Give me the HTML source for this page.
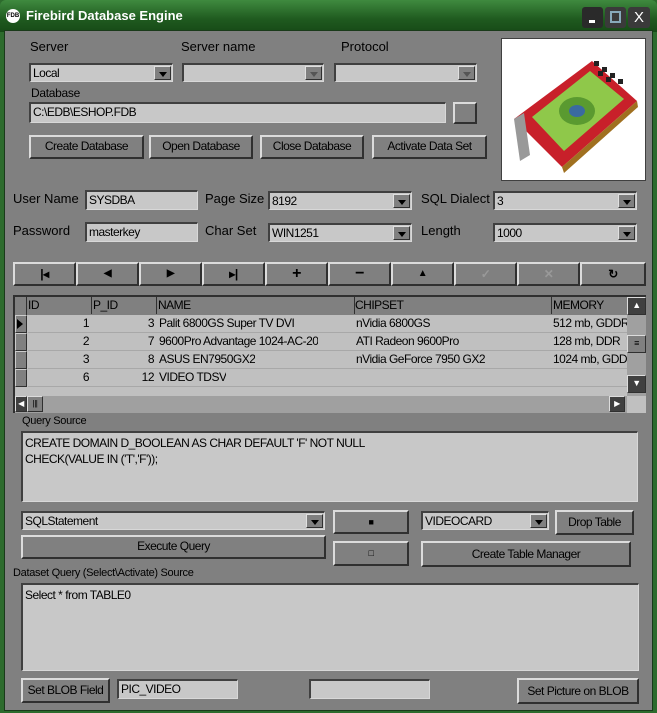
<!DOCTYPE html>
<html><head><meta charset="utf-8"><style>
*{box-sizing:border-box;margin:0;padding:0}
body{width:657px;height:713px;background:#2d6b2d;position:relative;overflow:hidden;font-family:"Liberation Sans",sans-serif;font-size:12px;color:#000}
.a{position:absolute}
#win{left:4px;top:30px;width:649px;height:681px;background:#808080;border:1px solid #1a3a1a}
#title{left:0;top:0;width:657px;height:32px;background:linear-gradient(#3f8a3f,#1f5a1f 60%,#174a17);border-radius:6px 6px 0 0}
.lbl{position:absolute;white-space:nowrap;color:#000;letter-spacing:-0.3px}
.big{font-size:13px;letter-spacing:0}
.inp{position:absolute;background:#c8c8c8;border-top:2px solid #404040;border-left:2px solid #404040;border-bottom:1px solid #d8d8d8;border-right:1px solid #d8d8d8;padding-left:2px;white-space:nowrap;overflow:hidden;line-height:16px;font-size:12px;letter-spacing:-0.5px}
.btn{position:absolute;background:#808080;border-top:2px solid #dcdcdc;border-left:2px solid #dcdcdc;border-bottom:2px solid #303030;border-right:2px solid #303030;text-align:center;white-space:nowrap;font-size:12px;letter-spacing:-0.5px}
.dd{position:absolute;right:1px;top:1px;width:17px;bottom:1px;background:#808080;border-top:1px solid #e0e0e0;border-left:1px solid #e0e0e0;border-bottom:1px solid #303030;border-right:1px solid #303030}
.dd:after{content:"";position:absolute;left:4px;top:5px;border-left:4px solid transparent;border-right:4px solid transparent;border-top:5px solid #000}
.dis:after{border-top-color:#555}
.cell{position:absolute;white-space:nowrap;overflow:hidden;font-size:12px;line-height:17px;letter-spacing:-0.5px}
.row{position:absolute;left:13px;width:599px;height:18px;border-bottom:1px solid #a8a8a8}
</style></head><body>
<div id="title" class="a">
 <div class="a" style="left:6px;top:9px;width:14px;height:14px;border-radius:7px;background:#fff;font-size:6px;line-height:14px;text-align:center;font-weight:bold">FDB</div>
 <div class="a" style="left:26px;top:8px;color:#fff;font-weight:bold;font-size:13px">Firebird Database Engine</div>
 <div class="a" style="left:582px;top:7px;width:21px;height:21px;background:#2a2a2a;border-radius:3px"><div class="a" style="left:7px;top:13px;width:6px;height:3px;background:#fff"></div></div>
 <div class="a" style="left:605px;top:7px;width:21px;height:21px;background:#3a3a3a;border-radius:3px"><div class="a" style="left:5px;top:4px;width:11px;height:12px;border:2px solid #8ab"></div></div>
 <div class="a" style="left:628px;top:7px;width:22px;height:21px;background:#3a3a3a;border-radius:3px;color:#fff;font-size:15px;text-align:center;line-height:21px">X</div>
</div>
<div id="win" class="a"></div>

<div class="lbl big" style="left:30px;top:39px">Server</div>
<div class="lbl big" style="left:181px;top:39px">Server name</div>
<div class="lbl big" style="left:341px;top:39px">Protocol</div>
<div class="inp" style="left:29px;top:63px;width:144px;height:19px">Local<div class="dd"></div></div>
<div class="inp" style="left:182px;top:63px;width:142px;height:19px"><div class="dd dis"></div></div>
<div class="inp" style="left:334px;top:63px;width:143px;height:19px"><div class="dd dis"></div></div>
<div class="lbl" style="left:31px;top:86px">Database</div>
<div class="inp" style="left:29px;top:102px;width:417px;height:21px;line-height:17px">C:\EDB\ESHOP.FDB</div>
<div class="btn" style="left:453px;top:102px;width:24px;height:22px;border-color:#dcdcdc #303030 #303030 #dcdcdc"></div>
<div class="btn" style="left:29px;top:135px;width:115px;height:24px;line-height:19px">Create Database</div>
<div class="btn" style="left:149px;top:135px;width:104px;height:24px;line-height:19px">Open Database</div>
<div class="btn" style="left:260px;top:135px;width:104px;height:24px;line-height:19px">Close Database</div>
<div class="btn" style="left:372px;top:135px;width:115px;height:24px;line-height:19px">Activate Data Set</div>

<div class="a" style="left:501px;top:38px;width:145px;height:143px;background:#fff;border:1px solid #404040">
<svg width="143" height="141" viewBox="0 0 143 141">
<polygon points="12,80 90,22 135,62 60,128" fill="#c8202a"/>
<polygon points="30,78 88,32 122,60 62,112" fill="#8fc84a"/>
<ellipse cx="75" cy="72" rx="18" ry="14" fill="#5a9a30"/>
<ellipse cx="75" cy="72" rx="8" ry="6" fill="#3a6aa0"/>
<polygon points="12,80 22,74 28,116 18,122" fill="#999"/>
<polygon points="60,128 135,62 136,68 62,134" fill="#a07020"/>
<g fill="#222"><rect x="92" y="22" width="5" height="5"/><rect x="100" y="28" width="5" height="5"/><rect x="108" y="34" width="5" height="5"/><rect x="116" y="40" width="5" height="5"/><rect x="96" y="32" width="5" height="5"/><rect x="104" y="38" width="5" height="5"/></g>
</svg></div>

<div class="lbl big" style="left:13px;top:191px">User Name</div>
<div class="inp" style="left:85px;top:190px;width:113px;height:20px">SYSDBA</div>
<div class="lbl big" style="left:205px;top:191px">Page Size</div>
<div class="inp" style="left:268px;top:191px;width:144px;height:19px">8192<div class="dd"></div></div>
<div class="lbl big" style="left:421px;top:191px">SQL Dialect</div>
<div class="inp" style="left:493px;top:191px;width:144px;height:19px">3<div class="dd"></div></div>
<div class="lbl big" style="left:13px;top:223px">Password</div>
<div class="inp" style="left:85px;top:222px;width:113px;height:20px">masterkey</div>
<div class="lbl big" style="left:205px;top:223px">Char Set</div>
<div class="inp" style="left:268px;top:223px;width:144px;height:19px">WIN1251<div class="dd"></div></div>
<div class="lbl big" style="left:421px;top:223px">Length</div>
<div class="inp" style="left:493px;top:223px;width:144px;height:19px">1000<div class="dd" style="background:#808080"></div></div>

<div class="a" style="left:13px;top:262px;width:633px;height:24px;font-size:13px;font-weight:bold">
 <div class="btn" style="left:0;top:0;width:63px;height:24px;line-height:20px">|◂</div>
 <div class="btn" style="left:63px;top:0;width:63px;height:24px;line-height:20px;font-size:10px">◀</div>
 <div class="btn" style="left:126px;top:0;width:63px;height:24px;line-height:20px;font-size:10px">▶</div>
 <div class="btn" style="left:189px;top:0;width:63px;height:24px;line-height:20px">▸|</div>
 <div class="btn" style="left:252px;top:0;width:63px;height:24px;line-height:20px;font-size:16px">+</div>
 <div class="btn" style="left:315px;top:0;width:63px;height:24px;line-height:20px;font-size:16px">−</div>
 <div class="btn" style="left:378px;top:0;width:63px;height:24px;line-height:20px;font-size:10px">▲</div>
 <div class="btn" style="left:441px;top:0;width:63px;height:24px;line-height:20px;color:#999">✓</div>
 <div class="btn" style="left:504px;top:0;width:63px;height:24px;line-height:20px;color:#999">✕</div>
 <div class="btn" style="left:567px;top:0;width:66px;height:24px;line-height:20px">↻</div>
</div>

<div class="a" style="left:13px;top:295px;width:633px;height:118px;background:#c0c0c0;border-top:2px solid #303030;border-left:2px solid #303030">
 <div class="a" style="left:0;top:0;width:612px;height:18px;background:#808080"></div>
 <div class="cell" style="left:0;top:0;width:12px;height:18px;border-right:1px solid #303030"></div>
 <div class="cell" style="left:13px;top:0;width:64px;border-right:1px solid #303030">ID</div>
 <div class="cell" style="left:78px;top:0;width:64px;border-right:1px solid #303030">P_ID</div>
 <div class="cell" style="left:143px;top:0;width:197px;border-right:1px solid #303030">NAME</div>
 <div class="cell" style="left:340px;top:0;width:197px;border-right:1px solid #303030">CHIPSET</div>
 <div class="cell" style="left:538px;top:0;width:74px">MEMORY</div>
 <div class="row" style="top:18px"></div><div class="row" style="top:36px"></div><div class="row" style="top:54px"></div><div class="row" style="top:72px"></div>
 <div class="a" style="left:0;top:18px;width:12px;height:18px;background:#808080;border:1px solid #303030;border-top-color:#ccc;border-left-color:#ccc"></div>
 <div class="a" style="left:0;top:36px;width:12px;height:18px;background:#808080;border:1px solid #303030;border-top-color:#ccc;border-left-color:#ccc"></div>
 <div class="a" style="left:0;top:54px;width:12px;height:18px;background:#808080;border:1px solid #303030;border-top-color:#ccc;border-left-color:#ccc"></div>
 <div class="a" style="left:0;top:72px;width:12px;height:18px;background:#808080;border:1px solid #303030;border-top-color:#ccc;border-left-color:#ccc"></div>
 <div class="a" style="left:2px;top:22px;border-top:5px solid transparent;border-bottom:5px solid transparent;border-left:6px solid #000"></div>
 <div class="cell" style="left:13px;top:18px;width:64px;text-align:right;padding-right:3px">1</div>
 <div class="cell" style="left:78px;top:18px;width:64px;text-align:right;padding-right:3px">3</div>
 <div class="cell" style="left:144px;top:18px">Palit 6800GS Super TV DVI</div>
 <div class="cell" style="left:341px;top:18px">nVidia 6800GS</div>
 <div class="cell" style="left:538px;top:18px;width:74px">512 mb, GDDR</div>
 <div class="cell" style="left:13px;top:36px;width:64px;text-align:right;padding-right:3px">2</div>
 <div class="cell" style="left:78px;top:36px;width:64px;text-align:right;padding-right:3px">7</div>
 <div class="cell" style="left:144px;top:36px">9600Pro Advantage 1024-AC-20</div>
 <div class="cell" style="left:341px;top:36px">ATI Radeon 9600Pro</div>
 <div class="cell" style="left:538px;top:36px;width:74px">128 mb, DDR</div>
 <div class="cell" style="left:13px;top:54px;width:64px;text-align:right;padding-right:3px">3</div>
 <div class="cell" style="left:78px;top:54px;width:64px;text-align:right;padding-right:3px">8</div>
 <div class="cell" style="left:144px;top:54px">ASUS EN7950GX2</div>
 <div class="cell" style="left:341px;top:54px">nVidia GeForce 7950 GX2</div>
 <div class="cell" style="left:538px;top:54px;width:74px">1024 mb, GDD</div>
 <div class="cell" style="left:13px;top:72px;width:64px;text-align:right;padding-right:3px">6</div>
 <div class="cell" style="left:78px;top:72px;width:64px;text-align:right;padding-right:3px">12</div>
 <div class="cell" style="left:144px;top:72px">VIDEO TDSV</div>
 <div class="a" style="left:612px;top:0;width:19px;height:99px;background:#a0a0a0"></div>
 <div class="btn" style="left:612px;top:0;width:19px;height:18px;border-width:1px;font-size:9px;line-height:15px;color:#fff;background:#404040">▲</div>
 <div class="btn" style="left:612px;top:38px;width:19px;height:18px;border-width:1px;font-size:9px;line-height:15px">≡</div>
 <div class="btn" style="left:612px;top:78px;width:19px;height:18px;border-width:1px;font-size:9px;line-height:15px;color:#fff;background:#404040">▼</div>
 <div class="a" style="left:0;top:99px;width:612px;height:17px;background:#a0a0a0"></div>
 <div class="btn" style="left:0;top:99px;width:12px;height:16px;border-width:1px;font-size:8px;line-height:13px;color:#fff;background:#404040">◀</div>
 <div class="btn" style="left:12px;top:99px;width:16px;height:16px;border-width:1px;font-size:8px;line-height:13px">|||</div>
 <div class="btn" style="left:594px;top:99px;width:16px;height:16px;border-width:1px;font-size:8px;line-height:13px;color:#fff;background:#404040">▶</div>
</div>

<div class="lbl" style="left:22px;top:415px;font-size:11px">Query Source</div>
<div class="inp" style="left:21px;top:431px;width:617px;height:71px;padding:2px">CREATE DOMAIN D_BOOLEAN AS CHAR DEFAULT 'F' NOT NULL<br>CHECK(VALUE IN ('T','F'));</div>

<div class="inp" style="left:21px;top:511px;width:304px;height:19px">SQLStatement<div class="dd"></div></div>
<div class="btn" style="left:333px;top:510px;width:76px;height:24px;line-height:20px;font-size:9px">■</div>
<div class="inp" style="left:421px;top:511px;width:128px;height:19px">VIDEOCARD<div class="dd"></div></div>
<div class="btn" style="left:555px;top:510px;width:79px;height:25px;line-height:21px">Drop Table</div>
<div class="btn" style="left:21px;top:535px;width:305px;height:24px;line-height:19px">Execute Query</div>
<div class="btn" style="left:333px;top:541px;width:76px;height:25px;line-height:21px;font-size:9px">□</div>
<div class="btn" style="left:421px;top:541px;width:210px;height:26px;line-height:22px">Create Table Manager</div>

<div class="lbl" style="left:13px;top:567px;font-size:11px">Dataset Query (Select\Activate) Source</div>
<div class="inp" style="left:21px;top:583px;width:618px;height:88px;padding:2px">Select * from TABLE0</div>

<div class="btn" style="left:21px;top:678px;width:89px;height:25px;line-height:21px">Set BLOB Field</div>
<div class="inp" style="left:117px;top:679px;width:121px;height:20px">PIC_VIDEO</div>
<div class="inp" style="left:309px;top:679px;width:121px;height:20px"></div>
<div class="btn" style="left:517px;top:678px;width:122px;height:26px;line-height:22px">Set Picture on BLOB</div>
</body></html>
